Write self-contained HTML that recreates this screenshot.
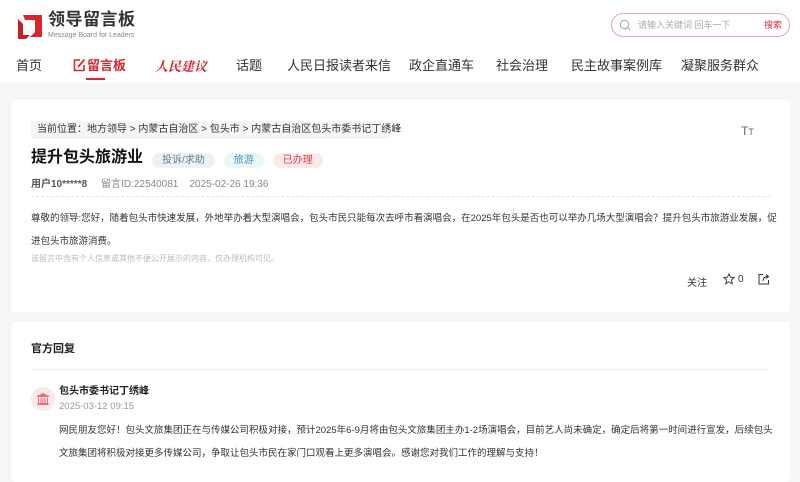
<!DOCTYPE html>
<html><head><meta charset="utf-8"><style>
*{margin:0;padding:0;box-sizing:border-box}
body{width:800px;height:469px;overflow:hidden;background:#f5f6f8;font-family:"Liberation Sans","Noto Sans CJK SC",sans-serif;color:#333;position:relative}
.hdr{position:absolute;left:0;top:0;width:800px;height:83px;background:#fff}
.abs{position:absolute;white-space:nowrap}
.nav{top:57px;font-size:13px;color:#333;line-height:17px}
.card{position:absolute;left:11px;width:779px;background:#fff;border-radius:4px}
.tag{display:inline-block;height:15px;line-height:15px;padding:0 10px;border-radius:8px;font-size:10px;margin-right:9px}
</style></head><body>
<div class="hdr"></div>
<svg class="abs" style="left:17px;top:13px" width="26" height="26" viewBox="0 0 26 26"><path d="M6 2H25V24H13L18 19V7H8Z" fill="#d7262d"/><path d="M1 6L6 11V22H13L9 26H1Z" fill="#c81e25"/></svg>
<div class="abs" style="left:48px;top:9px;font-size:17px;font-weight:bold;color:#333;letter-spacing:0.5px;line-height:21px">领导留言板</div>
<div class="abs" style="left:48px;top:31px;font-size:7px;color:#888;line-height:9px">Message Board for Leaders</div>
<div class="abs" style="left:611px;top:13px;width:179px;height:24px;border:1px solid #e8a5b0;border-radius:12px"></div>
<svg class="abs" style="left:619px;top:19px" width="12" height="12" viewBox="0 0 12 12"><circle cx="5.5" cy="5.5" r="4.2" fill="none" stroke="#aaa" stroke-width="1.1"/><path d="M8.5 8.5L11 11" stroke="#aaa" stroke-width="1.1"/></svg>
<div class="abs" style="left:638px;top:19px;font-size:9px;color:#aaa;line-height:12px">请输入关键词 回车一下</div>
<div class="abs" style="left:764px;top:19px;font-size:9px;color:#c8323c;line-height:12px">搜索</div>
<div class="abs nav" style="left:16px">首页</div>
<svg class="abs" style="left:73px;top:58px" width="13" height="14" viewBox="0 0 13 14"><path d="M7 2H1.5V12.5H11V7" fill="none" stroke="#d7262d" stroke-width="1.6"/><path d="M5 9L11.5 1.5" stroke="#d7262d" stroke-width="1.8"/></svg>
<div class="abs nav" style="left:87px;color:#d7262d;font-weight:bold">留言板</div>
<div class="abs" style="left:86px;top:78px;width:19px;height:2px;background:#d7262d"></div>
<div class="abs nav" style="left:155px;color:#d7262d;font-weight:bold;font-style:italic;font-family:'Noto Serif CJK SC',serif">人民建议</div>
<div class="abs nav" style="left:236px">话题</div>
<div class="abs nav" style="left:287px">人民日报读者来信</div>
<div class="abs nav" style="left:409px">政企直通车</div>
<div class="abs nav" style="left:496px">社会治理</div>
<div class="abs nav" style="left:571px">民主故事案例库</div>
<div class="abs nav" style="left:681px">凝聚服务群众</div>

<div class="card" style="top:100px;height:212px"></div>
<div class="abs" style="left:31px;top:121px;width:358px;height:18px;background:#f4f5f7"></div>
<div class="abs" style="left:37px;top:123px;font-size:10px;line-height:14px;color:#333">当前位置：地方领导 &gt; 内蒙古自治区 &gt; 包头市 &gt; 内蒙古自治区包头市委书记丁绣峰</div>
<div class="abs" style="left:741px;top:124px;font-size:12px;color:#666">T<span style="font-size:9px">T</span></div>
<div class="abs" style="left:31px;top:147px;font-size:16px;font-weight:bold;color:#111;line-height:22px">提升包头旅游业</div>
<div class="abs" style="left:152px;top:150px"><span class="tag" style="background:#eef1f6;color:#6b7a93">投诉/求助</span><span class="tag" style="background:#eaf6f8;color:#4a95b5">旅游</span><span class="tag" style="background:#fbeaec;color:#d7404a">已办理</span></div>
<div class="abs" style="left:31px;top:178px;font-size:10px;line-height:14px;color:#666"><b style="color:#555">用户10*****8</b>&nbsp;&nbsp;&nbsp;&nbsp; <span style="color:#888">留言ID:22540081&nbsp;&nbsp;&nbsp; 2025-02-26 19:36</span></div>
<div class="abs" style="left:31px;top:196px;width:739px;border-top:1px dashed #e6e6e6"></div>
<div class="abs" style="left:31px;top:207px;font-size:9.5px;line-height:23px;color:#333">尊敬的领导:您好，随着包头市快速发展，外地举办着大型演唱会，包头市民只能每次去呼市看演唱会，在2025年包头是否也可以举办几场大型演唱会？提升包头市旅游业发展，促<br>进包头市旅游消费。</div>
<div class="abs" style="left:31px;top:253px;font-size:8px;color:#bbb;line-height:12px">该留言中含有个人信息或其他不便公开展示的内容，仅办理机构可见。</div>
<div class="abs" style="left:687px;top:274px;font-size:10px;color:#333">关注</div>
<svg class="abs" style="left:723px;top:273px" width="12" height="12" viewBox="0 0 12 12"><path d="M6 .8L7.5 4.2 11.2 4.5 8.4 7 9.3 10.8 6 8.8 2.7 10.8 3.6 7 .8 4.5 4.5 4.2Z" fill="none" stroke="#333" stroke-width=".9"/></svg>
<div class="abs" style="left:738px;top:274px;font-size:10px;color:#333">0</div>
<svg class="abs" style="left:758px;top:273px" width="12" height="12" viewBox="0 0 12 12"><path d="M5 1.5H1V11H10.5V7" fill="none" stroke="#333" stroke-width="1"/><path d="M5 8C5 4.5 7 3.5 10 3.5M8 1.5L10.5 3.5 8 5.5" fill="none" stroke="#333" stroke-width="1"/></svg>

<div class="card" style="top:322px;height:160px"></div>
<div class="abs" style="left:31px;top:341px;font-size:11px;font-weight:bold;color:#222;line-height:16px">官方回复</div>
<div class="abs" style="left:31px;top:369px;width:739px;border-top:1px solid #eee"></div>
<div class="abs" style="left:31px;top:387px;width:24px;height:24px;border-radius:12px;background:#fbe9ea"></div>
<svg class="abs" style="left:36px;top:392px" width="14" height="14" viewBox="0 0 14 14"><path d="M1 4.5L7 1.5 13 4.5Z M1.5 12.5H12.5M2.5 5.5V11.5M5 5.5V11.5M7 5.5V11.5M9 5.5V11.5M11.5 5.5V11.5M1.5 11.5H12.5" fill="#e0707a" stroke="#e0707a" stroke-width="1"/></svg>
<div class="abs" style="left:59px;top:385px;font-size:10px;font-weight:bold;color:#222;line-height:14px">包头市委书记丁绣峰</div>
<div class="abs" style="left:59px;top:400px;font-size:9.5px;color:#999;line-height:14px">2025-03-12 09:15</div>
<div class="abs" style="left:59px;top:419px;font-size:9.5px;line-height:23px;color:#333">网民朋友您好！包头文旅集团正在与传媒公司积极对接，预计2025年6-9月将由包头文旅集团主办1-2场演唱会，目前艺人尚未确定，确定后将第一时间进行宣发，后续包头<br>文旅集团将积极对接更多传媒公司，争取让包头市民在家门口观看上更多演唱会。感谢您对我们工作的理解与支持！</div>
</body></html>
